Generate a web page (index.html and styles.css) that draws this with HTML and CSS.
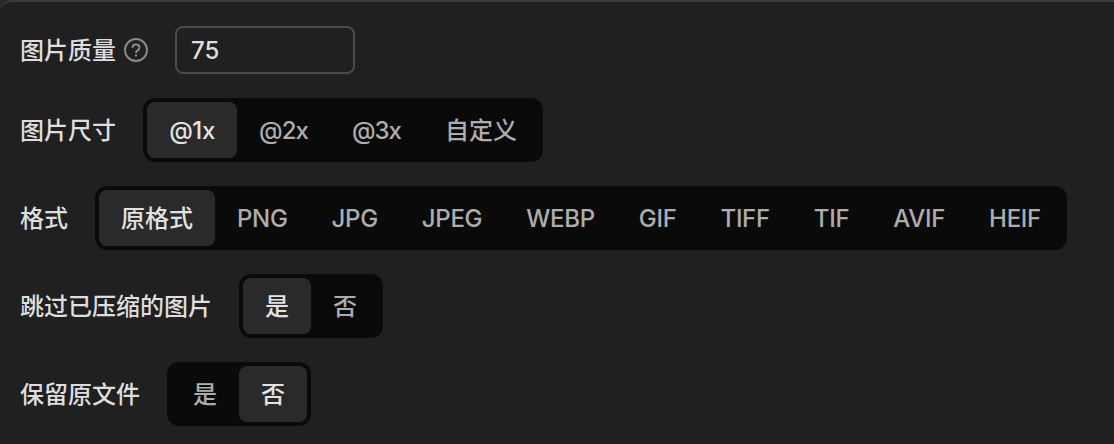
FILE: index.html
```html
<!DOCTYPE html>
<html lang="zh-CN">
<head>
<meta charset="utf-8">
<title>图片设置</title>
<link rel="stylesheet" href="styles.css">
</head>
<body>
<main class="panel">
  <div class="row row-input">
    <span class="label">图片质量</span>
    <svg class="help" viewBox="0 0 24 24" fill="none" stroke="currentColor" stroke-width="1.9"><circle cx="12" cy="12" r="11"/><path d="M8.5 9.9C8.5 7.8 10 6.5 12 6.5s3.5 1.3 3.5 3.1c0 1.5-.9 2.2-1.9 2.8-1 .6-1.6 1-1.6 2.6"/><circle cx="12" cy="17.5" r="1.15" fill="currentColor" stroke="none"/></svg>
    <input class="number" type="text" value="75">
  </div>
  <div class="row">
    <span class="label">图片尺寸</span>
    <div class="segmented size"><span class="option selected">@1x</span><span class="option">@2x</span><span class="option">@3x</span><span class="option cjk">自定义</span></div>
  </div>
  <div class="row">
    <span class="label">格式</span>
    <div class="segmented format"><span class="option selected cjk">原格式</span><span class="option">PNG</span><span class="option">JPG</span><span class="option">JPEG</span><span class="option">WEBP</span><span class="option">GIF</span><span class="option">TIFF</span><span class="option">TIF</span><span class="option">AVIF</span><span class="option">HEIF</span></div>
  </div>
  <div class="row">
    <span class="label">跳过已压缩的图片</span>
    <div class="segmented"><span class="option selected cjk">是</span><span class="option cjk">否</span></div>
  </div>
  <div class="row">
    <span class="label">保留原文件</span>
    <div class="segmented"><span class="option cjk">是</span><span class="option selected cjk">否</span></div>
  </div>
</main>
</body>
</html>
```
FILE: styles.css
```css
* { box-sizing: border-box; }
body { margin: 0; background: #2a2a2a; }
.panel {
  height: 444px;
  padding: 24px 20px 0;
  display: flex;
  flex-direction: column;
  gap: 24px;
  background: #202020;
  border-top: 2px solid #3b3b3b;
  border-top-left-radius: 12px;
  color: #dedede;
  font: 450 24px/36px Inter, "Noto Sans CJK SC", sans-serif;
}
.row { display: flex; align-items: center; height: 64px; }
.row-input { height: 48px; }
.label { white-space: nowrap; margin-right: 27px; padding-top: 2px; }
.row-input .label { margin-right: 8px; }
.help { width: 24px; height: 24px; margin-right: 27px; color: #8c8c8c; }
.number {
  width: 180px;
  height: 48px;
  padding: 1px 14px 0;
  border: 2px solid #4a4a4a;
  border-radius: 8px;
  background: #202020;
  color: #dedede;
  font: inherit;
  outline: 0;
}
.segmented { display: flex; height: 64px; padding: 4px; border-radius: 12px; background: #0a0a0a; color: #adadad; }
.option { display: flex; align-items: center; justify-content: center; padding: 2px 22px 0; height: 56px; border-radius: 8px; white-space: nowrap; letter-spacing: -0.3px; }
.size .option { letter-spacing: -0.95px; }
.size .selected { width: 90px; padding: 2px 0 0; letter-spacing: -0.4px; }
.segmented .cjk { letter-spacing: 0; }
.selected { background: #2a2a2a; color: #e2e2e2; }
```
